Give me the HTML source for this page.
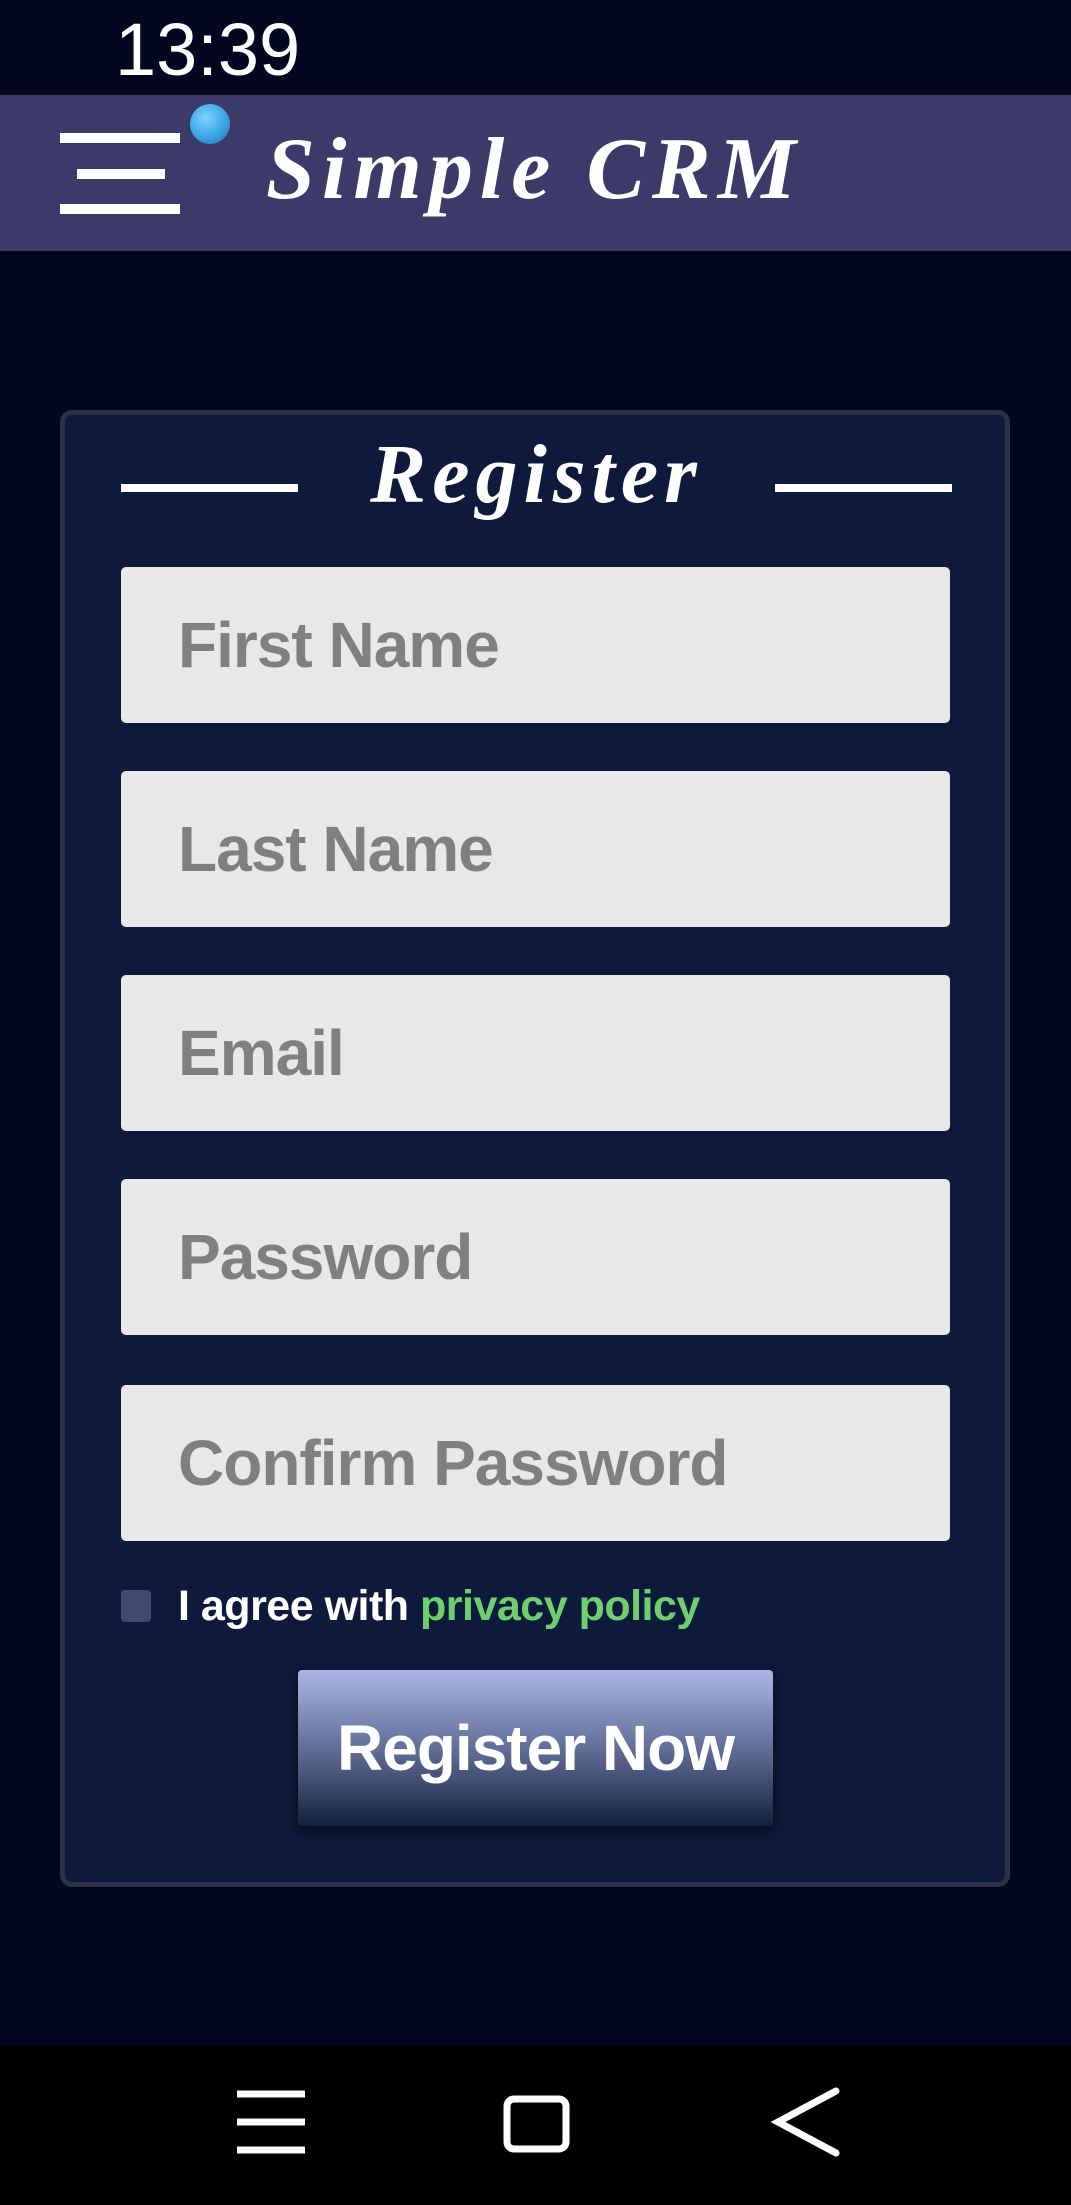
<!DOCTYPE html>
<html><head><meta charset="utf-8"><style>
*{margin:0;padding:0;box-sizing:border-box}
body{width:1071px;height:2205px;background:#02061e;position:relative;overflow:hidden;font-family:"Liberation Sans",sans-serif}
.abs{position:absolute}
.time{left:115px;top:6px;color:#fff;font-size:74px;line-height:88px}
.hdr{left:0;top:95px;width:1071px;height:156px;background:#3b3a69}
.bar{background:#fff;height:10px}
.logo{left:266px;top:120px;color:#fff;font-family:"Liberation Serif",serif;font-style:italic;font-weight:bold;font-size:88px;line-height:100px;letter-spacing:7px;white-space:nowrap}
.card{left:60px;top:410px;width:950px;height:1477px;background:#0e1a3c;border:5px solid #2b3148;border-radius:12px}
.line{background:#fff;height:8px;top:484px}
.title{left:298px;width:477px;top:430px;text-align:center;color:#fff;font-family:"Liberation Serif",serif;font-style:italic;font-weight:bold;font-size:84px;line-height:90px;letter-spacing:6px}
.inp{left:121px;width:829px;height:156px;background:#e8e8e8;border-radius:5px;color:#808080;font-weight:bold;font-size:64px;padding-left:57px;line-height:156px;letter-spacing:-1px}
.cb{left:121px;top:1590px;width:30px;height:32px;background:#3e4a72;border-radius:4px}
.agree{left:178px;top:1578px;color:#fff;font-weight:bold;font-size:43px;line-height:56px;letter-spacing:-0.5px}
.btn{left:298px;top:1670px;width:475px;height:156px;border-radius:4px;background:linear-gradient(#abb6e6,#5a6890 55%,#13213f);box-shadow:0 6px 14px rgba(0,0,0,.6);color:#fff;font-weight:bold;font-size:64px;text-align:center;line-height:156px;letter-spacing:-1px}
.nav{left:0;top:2046px;width:1071px;height:159px;background:#000}
</style></head><body>
<div class="abs time">13:39</div>
<div class="abs hdr"></div>
<div class="abs bar" style="left:60px;top:133px;width:120px"></div>
<div class="abs bar" style="left:77px;top:169px;width:88px"></div>
<div class="abs bar" style="left:60px;top:204px;width:120px"></div>
<div class="abs" style="left:190px;top:104px;width:40px;height:40px;border-radius:50%;background:radial-gradient(circle at 40% 35%,#7fd0ff,#3aa6e6 55%,#2a6a9a)"></div>
<div class="abs logo">Simple CRM</div>
<div class="abs card"></div>
<div class="abs line" style="left:121px;width:177px"></div>
<div class="abs line" style="left:775px;width:177px"></div>
<div class="abs title">Register</div>
<div class="abs inp" style="top:567px">First Name</div>
<div class="abs inp" style="top:771px">Last Name</div>
<div class="abs inp" style="top:975px">Email</div>
<div class="abs inp" style="top:1179px">Password</div>
<div class="abs inp" style="top:1385px">Confirm Password</div>
<div class="abs cb"></div>
<div class="abs agree">I agree with <span style="color:#6fcf6f">privacy policy</span></div>
<div class="abs btn">Register Now</div>
<div class="abs nav"></div>
<svg class="abs" style="left:0;top:2046px" width="1071" height="159">
<g stroke="#fff" stroke-width="7" fill="none">
<path d="M237 48H305M237 76H305M237 104H305"/>
<rect x="507" y="53" width="59" height="50" rx="7"/>
<path d="M836 45L778 76L836 107" stroke-linecap="round"/>
</g></svg>
</body></html>
